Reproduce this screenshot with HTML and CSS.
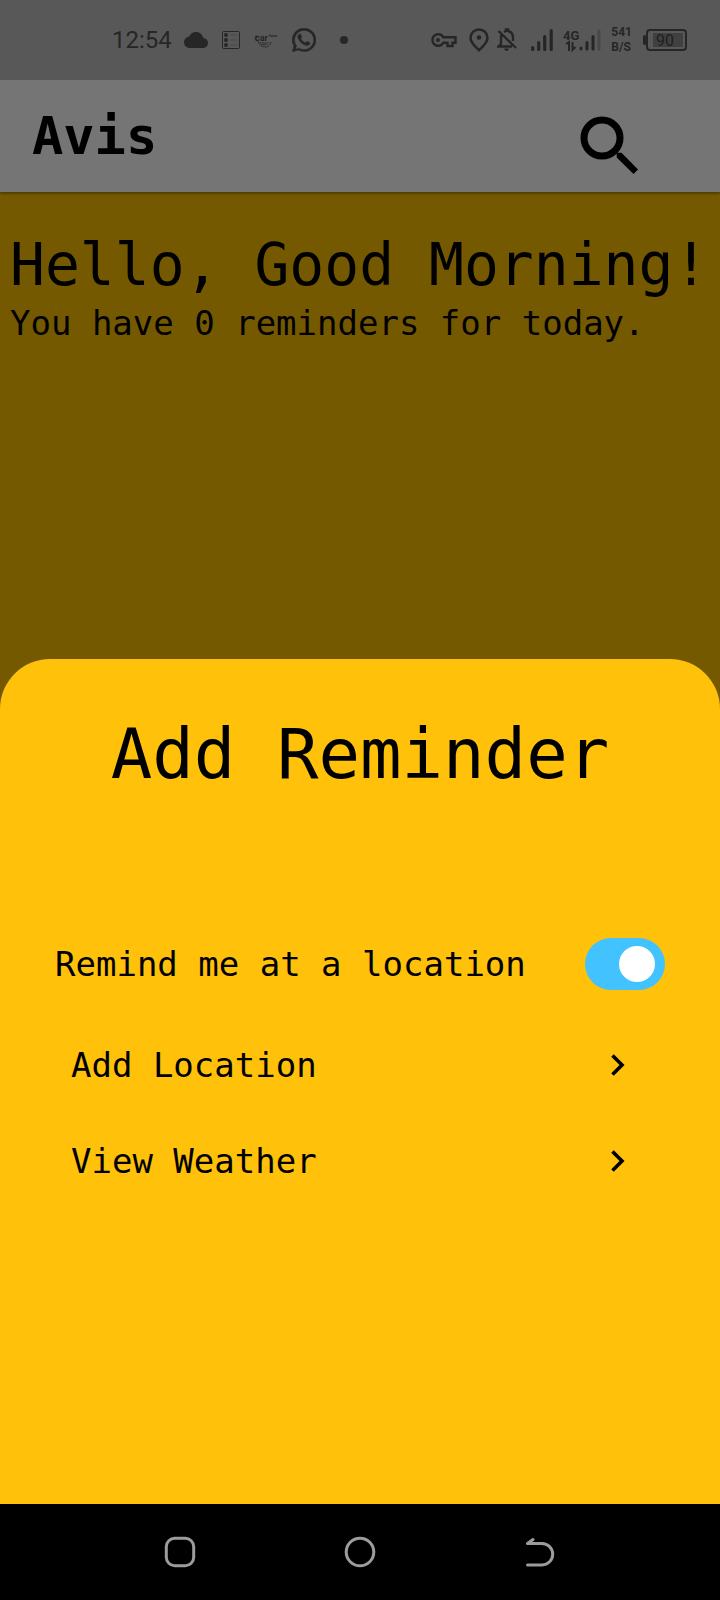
FILE: index.html
```html
<!DOCTYPE html>
<html lang="en">
<head>
<meta charset="utf-8">
<meta name="viewport" content="width=device-width, initial-scale=1">
<title>Avis</title>
<link rel="stylesheet" href="styles.css">
</head>
<body>
<div class="screen">
  <div class="status-bar">
    <div class="status-group status-left">
      <time class="clock">12:54</time>
      <svg class="cloud" width="24" height="16" viewBox="0 0 24 16"><path fill="currentColor" d="M19.200 6C18.500 2.500 15.500 0 12 0S6.500 1.800 5.200 4.500C2.200 5 0 7.300 0 10.200 0 13.500 2.700 16 6 16h13c2.800 0 5-2.200 5-5s-2.100-4.900-4.800-5z"/></svg>
      <svg width="18" height="18" viewBox="0 0 18 18"><rect x=".5" y=".5" width="17" height="17" rx="1" fill="none" stroke="currentColor"/><g fill="currentColor"><circle cx="4" cy="4" r="2"/><circle cx="4" cy="9" r="2"/><circle cx="4" cy="14" r="2"/></g><path d="M8 4h7M8 9h7M8 14h7" stroke="#484848"/></svg>
      <svg class="car-logo" width="24" height="16" viewBox="0 0 24 16"><text x="1" y="9" class="car-text">car</text><text x="15" y="5" class="fone-text">fone</text><path d="M4 4Q1 3 1 6t3 3q2 6 7 6 5 0 6-5M6 10q1 3 4 3t5-3M8 10.500q2 1.500 4.500 0" fill="none" stroke="currentColor" stroke-width=".8"/></svg>
      <svg width="24" height="24" viewBox="0 0 24 24"><path fill="currentColor" stroke="currentColor" stroke-width=".4" d="M12 .2A11.700 11.700 0 0 0 1.900 17.900L.3 23.800l6.200-1.700A11.700 11.700 0 1 0 12 .2zm0 21.400c-1.900 0-3.500-.5-5-1.400l-3.500 1 1-3.400A9.600 9.600 0 1 1 12 21.600zm5.500-7.200c-.3-.1-1.800-.9-2.100-1-.3-.1-.5-.1-.7.200l-.9 1.100c-.2.200-.4.200-.6.100-1.600-.8-3.200-1.800-4.300-4-.2-.3 0-.5.1-.6l.7-.9c.1-.2 0-.4 0-.5L8.800 6.500c-.3-.6-.5-.5-.7-.5-.6 0-1 0-1.300.4C5.100 8 5.500 10 7 12c1.600 2.300 3.600 4.400 7.100 5.400 1.200.4 3.300-.2 3.700-1.600.2-.6.300-1.200-.3-1.400z"/></svg>
      <svg class="dot" width="8" height="8" viewBox="0 0 8 8"><circle cx="4" cy="4" r="4" fill="currentColor"/></svg>
    </div>
    <div class="status-group status-right">
      <svg class="key" width="26" height="16" viewBox="0 0 26 16" fill="none" stroke="currentColor" stroke-width="2.400"><path d="M12.300 5.200A5.800 5.800 0 1 0 12.300 10.800H16.500V14H21.500V10.800H24.500V5.200Z"/><circle cx="7" cy="8" r="2" fill="currentColor" stroke="none"/></svg>
      <svg class="pin" width="20" height="24" viewBox="0 0 20 24"><path d="M10 1.500a8.500 8.500 0 0 0-8.500 8.500C1.500 14.500 6 18.500 10 22.300 14 18.500 18.500 14.500 18.500 10A8.500 8.500 0 0 0 10 1.500z" fill="none" stroke="currentColor" stroke-width="2.500"/><circle cx="10" cy="9.500" r="2.300" fill="currentColor"/></svg>
      <svg class="bell" width="20" height="24" viewBox="0 0 20 24" fill="none" stroke="currentColor" stroke-width="2.400"><path d="M7 4Q8 3.500 9 3V1.500h2V3Q16 4 16 10v3M4 7v9l-2.500 2.500H15M1.500 3 19 20"/><path d="M7 20.500h5q-1 2.500-2.500 2.500T7 20.500z" fill="currentColor" stroke="none"/></svg>
      <svg class="signal" width="22" height="22" viewBox="0 0 22 22" stroke="currentColor" stroke-width="3.200" stroke-linecap="round"><path d="M1.700 18.500v2M7.700 13.500v7M13.700 7.500v13M20.200 1.700v18.800"/></svg>
      <svg class="lte" width="38" height="24" viewBox="0 0 38 24"><text x="0" y="12" class="lte-text">4G</text><path d="M3 16l3-2v9M9.500 14v8l3-3" fill="none" stroke="currentColor" stroke-width="2"/><g stroke="currentColor" stroke-width="3" stroke-linecap="round"><path d="M18 20v1M24 14.500v6.500M30 8.500v12.500"/><path d="M36 3v18" stroke="#484848"/></g></svg>
      <div class="speed"><span>541</span><span>B/S</span></div>
      <svg class="battery" width="46" height="22" viewBox="0 0 46 22"><rect x="5" y="1" width="39" height="20" rx="3" fill="none" stroke="currentColor" stroke-width="2"/><path d="M2.500 7.500v7" stroke="currentColor" stroke-width="3" stroke-linecap="round"/><rect x="11" y="4" width="30" height="14" fill="#404040"/><text x="14" y="17" class="battery-text">90</text></svg>
    </div>
  </div>
  <header class="app-bar">
    <h1 class="brand">Avis</h1>
    <button class="search" type="button" aria-label="Search"><svg width="58" height="58" viewBox="0 0 58 58"><circle cx="22" cy="22" r="18" fill="none" stroke="currentColor" stroke-width="7"/><path fill="currentColor" d="M36.700 36.700H41.500L58 53.500 53.500 58 36.700 41.500Z"/></svg></button>
  </header>
  <main class="home">
    <h2 class="greeting">Hello, Good Morning!</h2>
    <p class="summary">You have 0 reminders for today.</p>
  </main>
  <section class="sheet" aria-labelledby="sheet-title">
    <h2 class="sheet-title" id="sheet-title">Add Reminder</h2>
    <div class="toggle-row">
      <label for="at-location">Remind me at a location</label>
      <input class="toggle" id="at-location" type="checkbox" role="switch" checked>
    </div>
    <div class="actions">
      <button class="action" type="button">Add Location<svg width="14" height="22" viewBox="0 0 14 22"><path d="M1.500 1.500l9.500 9.500-9.500 9.500" fill="none" stroke="currentColor" stroke-width="3.600"/></svg></button>
      <button class="action" type="button">View Weather<svg width="14" height="22" viewBox="0 0 14 22"><path d="M1.500 1.500l9.500 9.500-9.500 9.500" fill="none" stroke="currentColor" stroke-width="3.600"/></svg></button>
    </div>
  </section>
  <nav class="nav-bar" aria-label="System">
    <button type="button" aria-label="Recent apps"><svg width="32" height="32" viewBox="0 0 32 32"><rect x="2.300" y="2.300" width="27.400" height="27.400" rx="8.500"/></svg></button>
    <button type="button" aria-label="Home"><svg width="32" height="32" viewBox="0 0 32 32"><circle cx="16" cy="16" r="13.800"/></svg></button>
    <button type="button" aria-label="Back"><svg width="32" height="32" viewBox="0 0 32 32"><path d="M9 3.500 3.500 7.500H18a10.700 10.700 0 0 1 0 21.400H3.500" stroke-linecap="round" stroke-linejoin="round"/></svg></button>
  </nav>
</div>
</body>
</html>
```
FILE: styles.css
```css
* { box-sizing: border-box; }
body {
  margin: 0;
  background: #755900;
  color: #000;
  font-family: "DejaVu Sans Mono", "Liberation Mono", monospace;
}
h1, h2, p { margin: 0; font-weight: 400; }
button {
  padding: 0;
  border: 0;
  background: none;
  color: inherit;
  font: inherit;
  cursor: pointer;
}
svg { display: block; flex: none; }

.screen {
  display: flex;
  flex-direction: column;
  min-height: 100vh;
}

.status-bar {
  display: flex;
  align-items: center;
  justify-content: space-between;
  height: 80px;
  padding: 0 32px 0 112px;
  background: #585858;
  color: #262626;
  font-family: Roboto, sans-serif;
}
.status-group { display: flex; align-items: center; }
.status-left { gap: 14px; }
.clock { margin-right: -2px; font-size: 24px; line-height: 28px; }
.dot { margin-left: 10px; }
.car-text { font: 700 9px Roboto, sans-serif; fill: currentColor; }
.fone-text { font: 700 4px Roboto, sans-serif; fill: currentColor; }
.status-right { gap: 10px; }
.pin { margin-left: 2px; }
.signal { margin-left: 4px; }
.bell { margin-left: -2px; }
.lte-text { font: 700 13px Roboto, sans-serif; fill: currentColor; }
.speed {
  display: flex;
  flex-direction: column;
  font-size: 12px;
  font-weight: 700;
  line-height: 15px;
}
.battery-text { font: 400 16px Roboto, sans-serif; fill: #202020; }

.app-bar {
  display: flex;
  align-items: center;
  justify-content: space-between;
  height: 112px;
  padding: 0 82px 0 32px;
  background: #757575;
  box-shadow: 0 2px 2px rgba(0, 0, 0, 0.3);
}
.brand { font-size: 52px; font-weight: 700; line-height: 64px; }
.search { margin-top: 18px; }

.home {
  flex: 1;
  padding: 37px 10px 0;
  white-space: nowrap;
}
.greeting { font-size: 58px; line-height: 72px; }
.summary { font-size: 34px; line-height: 44px; }

.sheet {
  padding: 55px 55px 295px;
  border-radius: 50px 50px 0 0;
  background: #ffc10a;
  font-size: 34px;
  line-height: 44px;
}
.sheet-title {
  font-size: 69px;
  line-height: 80px;
  text-align: center;
  white-space: nowrap;
}
.toggle-row {
  display: flex;
  align-items: center;
  justify-content: space-between;
  margin: 144px 0 27px;
}
.toggle {
  display: flex;
  align-items: center;
  appearance: none;
  width: 80px;
  height: 52px;
  margin: 0;
  padding: 0 10px;
  border-radius: 26px;
  background: #42c3ff;
}
.toggle::before {
  content: "";
  width: 36px;
  height: 36px;
  border-radius: 50%;
  background: #fff;
}
.toggle:checked { justify-content: flex-end; }
.actions { display: flex; flex-direction: column; padding: 0 40px 0 16px; }
.action {
  display: flex;
  align-items: center;
  justify-content: space-between;
  height: 96px;
  text-align: left;
}

.nav-bar {
  display: flex;
  height: 96px;
  padding: 0 12.5%;
  background: #000;
  color: #9c9c9c;
}
.nav-bar button { display: flex; flex: 1; align-items: center; justify-content: center; }
.nav-bar svg { fill: none; stroke: currentColor; stroke-width: 3; }
```
